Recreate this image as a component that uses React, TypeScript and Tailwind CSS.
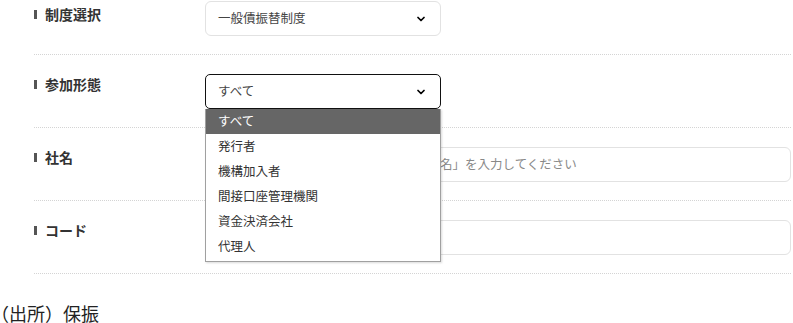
import React from 'react';
import { ChevronDown } from 'lucide-react';

const options = ['すべて', '発行者', '機構加入者', '間接口座管理機関', '資金決済会社', '代理人'];

function Label({ text }: { text: string }) {
    return (
        <div className="w-[171px] shrink-0 flex items-center h-5 gap-[8px]">
            <span className="w-[3px] h-[9px] bg-[#555] inline-block" />
            <span className="text-[14px] font-bold text-[#333] leading-5">{text}</span>
        </div>
    );
}

function Row({ label, first, children }: { label: string; first?: boolean; children: React.ReactNode }) {
    return (
        <div
            className={`flex items-start border-b border-dotted border-[#d4d4d4] ${first ? 'pt-px pb-[18px]' : 'pt-[19px] pb-[18px]'}`}
        >
            <div className={first ? 'pt-[3px]' : 'pt-[0px]'}>
                <Label text={label} />
            </div>
            {children}
        </div>
    );
}

export default function App() {
    return (
        <div className="w-[793px] h-[323px] overflow-hidden bg-white text-[#333] font-['Noto_Sans_CJK_JP','Noto_Sans',sans-serif]">
            <div className="pl-[34px] pr-[2px]">
                <Row label="制度選択" first>
                    <div className="w-[236px] h-[35px] rounded-[6px] border border-[#e2e2e2] flex items-center justify-between pl-[12px] pr-[13px]">
                        <span className="text-[12.5px] text-[#444]">一般債振替制度</span>
                        <ChevronDown size={12} strokeWidth={3.5} className="text-black" />
                    </div>
                </Row>

                <Row label="参加形態">
                    <div className="relative z-10">
                        <div className="w-[236px] h-[35px] rounded-[5px] border-[1.5px] border-[#111] flex items-center justify-between pl-[12px] pr-[13px]">
                            <span className="text-[12.5px] text-[#444]">すべて</span>
                            <ChevronDown size={12} strokeWidth={3.5} className="text-black" />
                        </div>
                        <ul className="absolute left-0 top-full w-[236px] bg-white border border-[#a0a0a0] border-t-0 pb-[2px] shadow-[1px_1px_2px_rgba(0,0,0,0.15)]">
                            {options.map((o, i) => (
                                <li
                                    key={o}
                                    className={`h-[25px] flex items-center px-[12px] text-[12.5px] ${i === 0 ? 'bg-[#666] text-white' : 'text-[#333]'}`}
                                >
                                    {o}
                                </li>
                            ))}
                        </ul>
                    </div>
                </Row>

                <Row label="社名">
                    <div className="flex-1 h-[35px] rounded-[6px] border border-[#e2e2e2] flex items-center pl-[9px] overflow-hidden">
                        <span className="text-[12.5px] text-[#888] whitespace-nowrap">「社名」または「社名の一部」、「社名仮名」を入力してください</span>
                    </div>
                </Row>

                <Row label="コード">
                    <div className="flex-1 h-[35px] rounded-[6px] border border-[#e2e2e2]" />
                </Row>
            </div>

            <p className="mt-[27px] -ml-[9px] text-[18px] leading-6 text-[#222]">（出所）保振</p>
        </div>
    );
}
